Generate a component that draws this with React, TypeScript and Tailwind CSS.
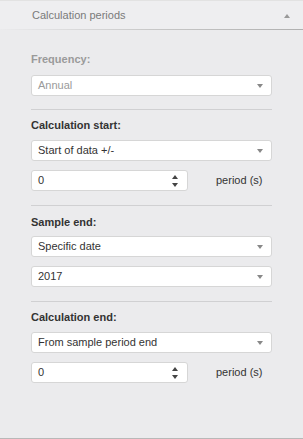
function Caret() {
  return <span className="w-0 h-0 border-x-[3px] border-x-transparent border-t-[4px] border-t-[#888]" />
}

function Select({ value, disabled = false }: { value: string; disabled?: boolean }) {
  return (
    <div className="h-[21px] w-[241px] bg-white border border-[#d6d6d6] rounded-[3px] flex items-center justify-between pl-[6px] pr-[8px]">
      <span className={disabled ? "text-[#9a9a9a]" : "text-[#333]"}>{value}</span>
      <Caret />
    </div>
  )
}

function NumberRow() {
  return (
    <div className="flex items-center mt-[9px]">
      <div className="h-[21px] w-[157px] bg-white border border-[#d6d6d6] rounded-[3px] flex items-center justify-between pl-[6px] pr-[9px]">
        <span className="text-[#333]">0</span>
        <span className="flex flex-col items-center gap-[4px]">
          <span className="w-0 h-0 border-x-[3px] border-x-transparent border-b-[4px] border-b-[#444]" />
          <span className="w-0 h-0 border-x-[3px] border-x-transparent border-t-[4px] border-t-[#444]" />
        </span>
      </div>
      <span className="ml-[28px] text-[#333]">period (s)</span>
    </div>
  )
}

export default function App() {
  return (
    <div className="w-[303px] h-[439px] bg-[#ebebed] border-b border-[#b8b8b8] flex flex-col text-[11px] leading-[15px] font-['Liberation_Sans',Arial,sans-serif]">
      <div className="h-[30px] shrink-0 flex items-center justify-between pl-[32px] pr-[13px] bg-[#eeeef0] border-t border-[#e2e2e2] relative">
        <span className="text-[#7a7a7a]">Calculation periods</span>
        <span className="w-0 h-0 border-x-[3px] border-x-transparent border-b-[4px] border-b-[#999]" />
        <span className="absolute left-0 right-0 bottom-0 h-px bg-gradient-to-r from-[#ebebed] via-[#c8c8c8] to-[#b0b0b0]" />
      </div>
      <div className="pl-[31px] flex flex-col">
        <div className="mt-[22px] font-bold text-[#9a9a9a]">Frequency:</div>
        <div className="mt-[8px]"><Select value="Annual" disabled /></div>
        <div className="mt-[13px] w-[241px] h-px bg-[#d0d0d2]" />

        <div className="mt-[8px] font-bold text-[#333]">Calculation start:</div>
        <div className="mt-[7px]"><Select value="Start of data +/-" /></div>
        <NumberRow />
        <div className="mt-[14px] w-[241px] h-px bg-[#d0d0d2]" />

        <div className="mt-[9px] font-bold text-[#333]">Sample end:</div>
        <div className="mt-[6px]"><Select value="Specific date" /></div>
        <div className="mt-[9px]"><Select value="2017" /></div>
        <div className="mt-[14px] w-[241px] h-px bg-[#d0d0d2]" />

        <div className="mt-[8px] font-bold text-[#333]">Calculation end:</div>
        <div className="mt-[7px]"><Select value="From sample period end" /></div>
        <NumberRow />
      </div>
    </div>
  )
}
